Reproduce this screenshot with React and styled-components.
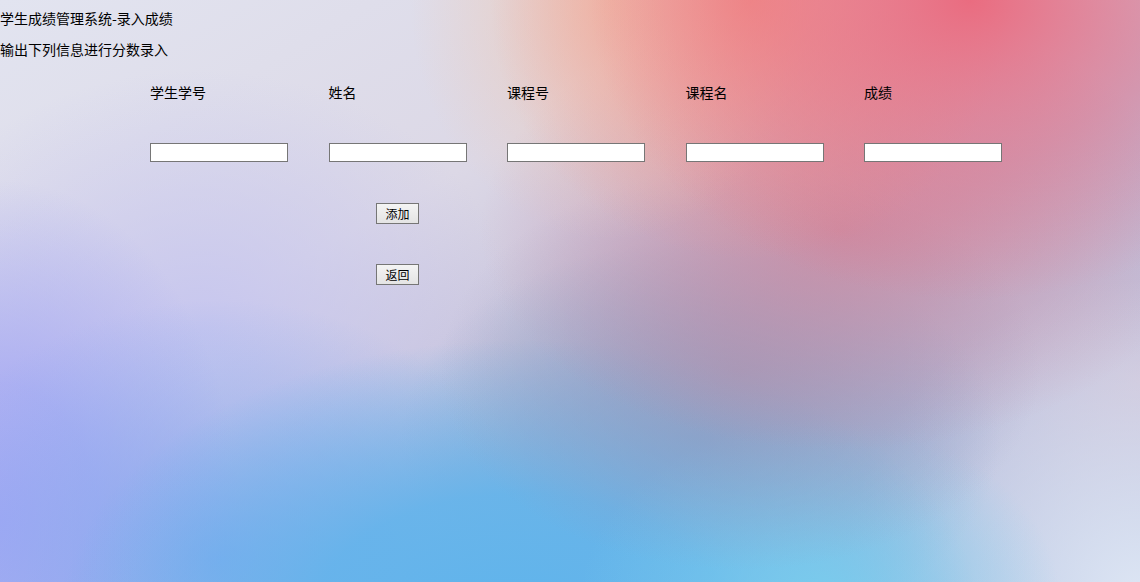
import styled, { createGlobalStyle } from 'styled-components'

const GlobalStyle = createGlobalStyle`
  html, body {
    margin: 0;
    padding: 0;
  }
  body {
    font-family: "Noto Sans CJK SC", "Noto Sans", sans-serif;
    font-size: 14px;
    color: #000;
  }
`

const fields = ['学生学号', '姓名', '课程号', '课程名', '成绩']

export default function App() {
  return (
    <Page>
      <GlobalStyle />
      <Title>学生成绩管理系统-录入成绩</Title>
      <Hint>输出下列信息进行分数录入</Hint>
      <FormGrid>
        {fields.map((f) => (
          <Label key={f}>{f}</Label>
        ))}
        {fields.map((f) => (
          <Field key={f + '-in'}>
            <Input type="text" />
          </Field>
        ))}
      </FormGrid>
      <Actions>
        <Button>添加</Button>
        <Button>返回</Button>
      </Actions>
    </Page>
  )
}

const Page = styled.div`
  width: 1140px;
  height: 582px;
  overflow: hidden;
  box-sizing: border-box;
  padding-top: 9px;
  background:
    radial-gradient(ellipse 380px 300px at 970px 0px, rgba(234, 108, 128, 1), rgba(234, 108, 128, 0) 100%),
    radial-gradient(ellipse 260px 260px at 750px 0px, rgba(242, 146, 136, 0.95), rgba(242, 146, 136, 0) 100%),
    radial-gradient(ellipse 200px 240px at 610px 0px, rgba(238, 200, 180, 0.9), rgba(238, 200, 180, 0) 100%),
    radial-gradient(ellipse 360px 220px at 840px 230px, rgba(204, 136, 158, 0.85), rgba(204, 136, 158, 0) 100%),
    radial-gradient(ellipse 300px 200px at 740px 370px, rgba(158, 154, 186, 0.8), rgba(158, 154, 186, 0) 100%),
    radial-gradient(ellipse 240px 180px at 820px 600px, rgba(120, 206, 238, 0.9), rgba(120, 206, 238, 0) 100%),
    radial-gradient(ellipse 460px 280px at 520px 620px, rgba(94, 180, 236, 1) 0%, rgba(94, 180, 236, 0.85) 45%, rgba(94, 180, 236, 0) 100%),
    radial-gradient(ellipse 300px 200px at 700px 440px, rgba(128, 166, 208, 0.9), rgba(128, 166, 208, 0) 100%),
    radial-gradient(ellipse 300px 320px at 1140px 600px, rgba(222, 230, 244, 1), rgba(222, 230, 244, 0) 100%),
    radial-gradient(ellipse 320px 260px at 220px 560px, rgba(130, 168, 240, 0.9), rgba(130, 168, 240, 0) 100%),
    radial-gradient(ellipse 240px 340px at 0px 520px, rgba(164, 168, 244, 1) 0%, rgba(164, 168, 244, 0.8) 40%, rgba(164, 168, 244, 0) 100%),
    radial-gradient(ellipse 240px 240px at 1140px 380px, rgba(204, 194, 216, 1), rgba(204, 194, 216, 0) 100%),
    radial-gradient(ellipse 320px 260px at 200px 330px, rgba(196, 196, 240, 0.9), rgba(196, 196, 240, 0) 100%),
    linear-gradient(150deg, #e2e4f0 0%, #dcd8e6 35%, #c0bcd8 60%, #a8bce0 100%);
`

const Title = styled.p`
  margin: 0;
  line-height: 18px;
`

const Hint = styled.p`
  margin: 13px 0 0;
  line-height: 18px;
`

const FormGrid = styled.div`
  display: grid;
  grid-template-columns: repeat(5, 178.5px);
  row-gap: 42px;
  margin: 25px 0 0 150px;
`

const Label = styled.div`
  line-height: 18px;
`

const Field = styled.div`
  display: flex;
`

const Input = styled.input`
  box-sizing: border-box;
  width: 138px;
  height: 19px;
  margin: 0;
  padding: 0 2px;
  border: 1px solid #767676;
  background: #fff;
  font-size: 12px;
  outline: none;
`

const Actions = styled.div`
  display: flex;
  flex-direction: column;
  align-items: flex-start;
  gap: 40px;
  margin: 41px 0 0 376px;
`

const Button = styled.button`
  box-sizing: border-box;
  width: 43px;
  height: 21px;
  margin: 0;
  padding: 0;
  border: 1px solid #767676;
  border-radius: 0;
  background: linear-gradient(#f4f4f4, #e4e4e4);
  font-family: "Noto Sans CJK SC", sans-serif;
  font-size: 12px;
  line-height: 19px;
  color: #000;
`
